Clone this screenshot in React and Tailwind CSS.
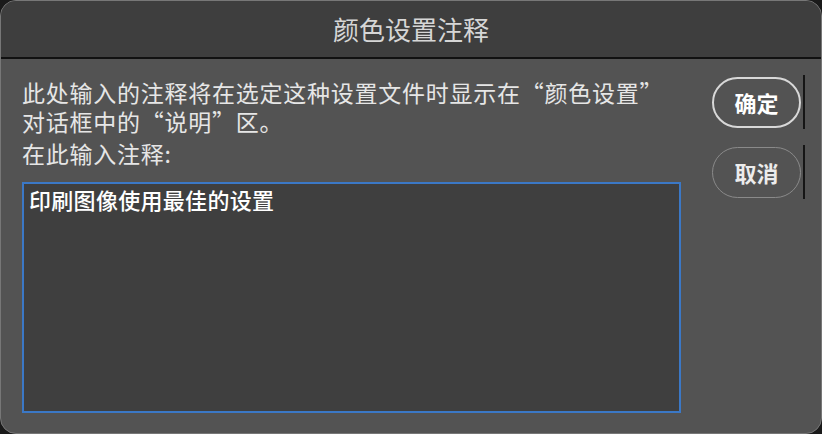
export default function App() {
  const font = { fontFamily: '"Noto Sans CJK SC", "Noto Sans", sans-serif' };
  return (
    <div className="w-[822px] h-[434px] bg-[#1a1a1a]" style={font}>
      <div className="w-full h-full rounded-[16px] border border-[#777777] bg-[#535353] overflow-hidden flex flex-col">
        <div className="h-[56px] shrink-0 bg-[#3e3e3e] flex items-center justify-center border-b-2 border-[#111111] box-content">
          <span className="text-[26px] leading-none text-[#d6d6d6]">颜色设置注释</span>
        </div>
        <div className="flex-1 flex flex-row pl-[21px] pb-[20px]">
          <div className="w-[659px] flex flex-col pt-[19px]">
            <div className="text-[23px] leading-[29px] tracking-[0.75px] text-[#e6e6e6]">
              <p>此处输入的注释将在选定这种设置文件时显示在“颜色设置”</p>
              <p>对话框中的“说明”区。</p>
            </div>
            <p className="mt-[3px] text-[23px] leading-[29px] tracking-[0.75px] text-[#e6e6e6]">在此输入注释:</p>
            <div className="mt-[14px] flex-1 border-2 border-[#3b78c6] bg-[#3f3f3f] px-[5px] pt-[3px]">
              <p className="text-[22px] leading-[24px] tracking-[0.3px] text-white font-medium">印刷图像使用最佳的设置</p>
            </div>
          </div>
          <div className="ml-[31px] flex flex-col pt-[16px] gap-[16px]">
            <div className="flex flex-row items-center">
              <button className="w-[89px] h-[51px] rounded-full border-2 border-[#d8d8d8] text-[22px] font-semibold text-white leading-none">确定</button>
              <div className="ml-[2px] w-[2px] h-[54px] bg-[#151515]"></div>
            </div>
            <div className="flex flex-row items-center">
              <button className="w-[89px] h-[51px] rounded-full border-[1.5px] border-[#8a8a8a] text-[22px] font-semibold text-[#ececec] leading-none">取消</button>
              <div className="ml-[2px] w-[2px] h-[54px] bg-[#151515]"></div>
            </div>
          </div>
        </div>
      </div>
    </div>
  );
}
